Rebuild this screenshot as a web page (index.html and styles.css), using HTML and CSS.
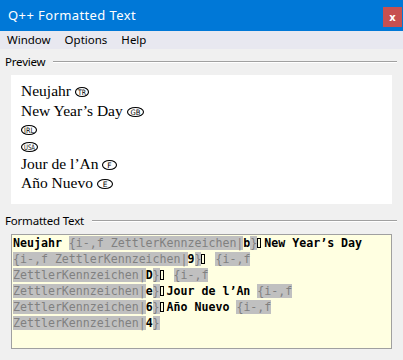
FILE: index.html
```html
<!DOCTYPE html>
<html lang="de">
<head>
  <meta charset="UTF-8" />
  <title>Q++ Formatted Text</title>
  <link rel="stylesheet" href="styles.css">
</head>
<body>
  <div class="titlebar">
    <span class="title">Q++ Formatted Text</span>
    <button class="close">x</button>
  </div>

  <div class="menubar">
    <a href="#">Window</a>
    <a href="#">Options</a>
    <a href="#">Help</a>
  </div>

  <div class="content">
    <div class="group-head">
      <span>Preview</span>
      <div class="rule"></div>
    </div>
    <div class="preview">
      <div class="line first">Neujahr <svg class="plate" width="14" height="10"><ellipse cx="7" cy="5" rx="6.5" ry="4.5"/><text x="7" y="7.7" textLength="8" lengthAdjust="spacingAndGlyphs">TR</text></svg></div>
      <div class="line">New Year’s Day <svg class="plate" width="17" height="10"><ellipse cx="8.5" cy="5" rx="8" ry="4.5"/><text x="8.5" y="7.7" textLength="10" lengthAdjust="spacingAndGlyphs">GB</text></svg></div>
      <div class="line icon"><svg class="plate" width="16" height="10"><ellipse cx="8" cy="5" rx="7.5" ry="4.5"/><text x="8" y="7.7" textLength="10" lengthAdjust="spacingAndGlyphs">IRL</text></svg></div>
      <div class="line icon"><svg class="plate" width="17" height="10"><ellipse cx="8.5" cy="5" rx="8" ry="4.5"/><text x="8.5" y="7.7" textLength="11" lengthAdjust="spacingAndGlyphs">USA</text></svg></div>
      <div class="line">Jour de l’An <svg class="plate" width="15" height="10"><ellipse cx="7.5" cy="5" rx="7" ry="4.5"/><text x="7.5" y="7.7">F</text></svg></div>
      <div class="line">Año Nuevo <svg class="plate" width="16" height="10"><ellipse cx="8" cy="5" rx="7.5" ry="4.5"/><text x="8" y="7.7">E</text></svg></div>
    </div>

    <div class="group-head second">
      <span>Formatted Text</span>
      <div class="rule"></div>
    </div>
    <div class="code">
      <div class="row"><b>Neujahr </b><span class="tag">{i-,f ZettlerKennzeichen|</span><b>b</b><span class="tag">}</span><i class="ctl"></i><b>New Year’s Day</b></div>
      <div class="row"><span class="tag">{i-,f ZettlerKennzeichen|</span><b>9</b><span class="tag">}</span><i class="ctl"></i> <span class="tag">{i-,f</span></div>
      <div class="row"><span class="tag">ZettlerKennzeichen|</span><b>D</b><span class="tag">}</span><i class="ctl"></i> <span class="tag">{i-,f</span></div>
      <div class="row"><span class="tag">ZettlerKennzeichen|</span><b>e</b><span class="tag">}</span><i class="ctl"></i><b>Jour de l’An </b><span class="tag">{i-,f</span></div>
      <div class="row"><span class="tag">ZettlerKennzeichen|</span><b>6</b><span class="tag">}</span><i class="ctl"></i><b>Año Nuevo </b><span class="tag">{i-,f</span></div>
      <div class="row"><span class="tag">ZettlerKennzeichen|</span><b>4</b><span class="tag">}</span></div>
    </div>
  </div>
</body>
</html>
```

FILE: styles.css
```css
:root {
  --accent: #0078d7;
  --close: #c75050;
  --panel: #f0f0f0;
  --menu: #e8e8f0;
  --rule: #a0a0a0;
  --code-bg: #ffffe1;
  --tag-bg: #c0c0c0;
  --tag-text: #808080;
}

* {
  box-sizing: border-box;
  margin: 0;
  padding: 0;
}

body {
  width: 403px;
  height: 360px;
  background: var(--panel);
  font-family: "Noto Sans", sans-serif;
  font-size: 11.5px;
  color: #000;
  overflow: hidden;
}

.titlebar {
  display: flex;
  align-items: flex-start;
  height: 31px;
  background: var(--accent);
  color: #fff;
  padding-left: 8px;
}

.title {
  margin-top: 6px;
  font-size: 13px;
  line-height: 18px;
  letter-spacing: 0.4px;
}

.close {
  margin: 7px 1px 0 auto;
  width: 19px;
  height: 20px;
  border: none;
  background: var(--close);
  color: #fff;
  font-family: "DejaVu Sans", sans-serif;
  font-weight: bold;
  font-size: 10px;
}

.menubar {
  display: flex;
  height: 18px;
  background: var(--menu);
}

.menubar a {
  color: #000;
  text-decoration: none;
  line-height: 18px;
  padding: 0 7px;
}

.content {
  padding: 0 6px 0 5px;
}

.group-head {
  display: flex;
  margin-top: 6px;
  height: 14px;
  line-height: 14px;
  letter-spacing: -0.2px;
}

.group-head.second {
  margin-top: 10px;
}

.group-head .rule {
  flex: 1;
  margin: 6px 0 0 8px;
  height: 2px;
  border-top: 1px solid var(--rule);
  border-bottom: 1px solid #fff;
}

.preview {
  margin: 6px 5px 0 6px;
  height: 129px;
  background: #fff;
  padding: 6px 10px 0;
  font-family: "Liberation Serif", serif;
  font-size: 15.5px;
}

.line {
  line-height: 19px;
  white-space: nowrap;
}

.line.first {
  line-height: 20px;
}

.line.icon {
  line-height: 17px;
}

.plate {
  vertical-align: -1px;
  overflow: visible;
}

.plate ellipse {
  fill: none;
  stroke: #000;
  stroke-width: 1.1;
}

.plate text {
  font-family: "DejaVu Sans", sans-serif;
  font-size: 7.5px;
  text-anchor: middle;
  fill: #000;
}

.code {
  margin: 6px 5px 0 6px;
  height: 115px;
  border: 1px solid var(--rule);
  background: var(--code-bg);
  padding: 0 1px;
  font-family: "DejaVu Sans Mono", monospace;
  font-size: 11.6px;
}

.row {
  line-height: 16px;
  white-space: pre;
}

.row b {
  font-weight: bold;
}

.tag {
  background: var(--tag-bg);
  color: var(--tag-text);
}

.ctl {
  display: inline-block;
  width: 4px;
  height: 10px;
  border: 1.5px solid #000;
  margin-right: 3px;
  vertical-align: -1px;
}
```
